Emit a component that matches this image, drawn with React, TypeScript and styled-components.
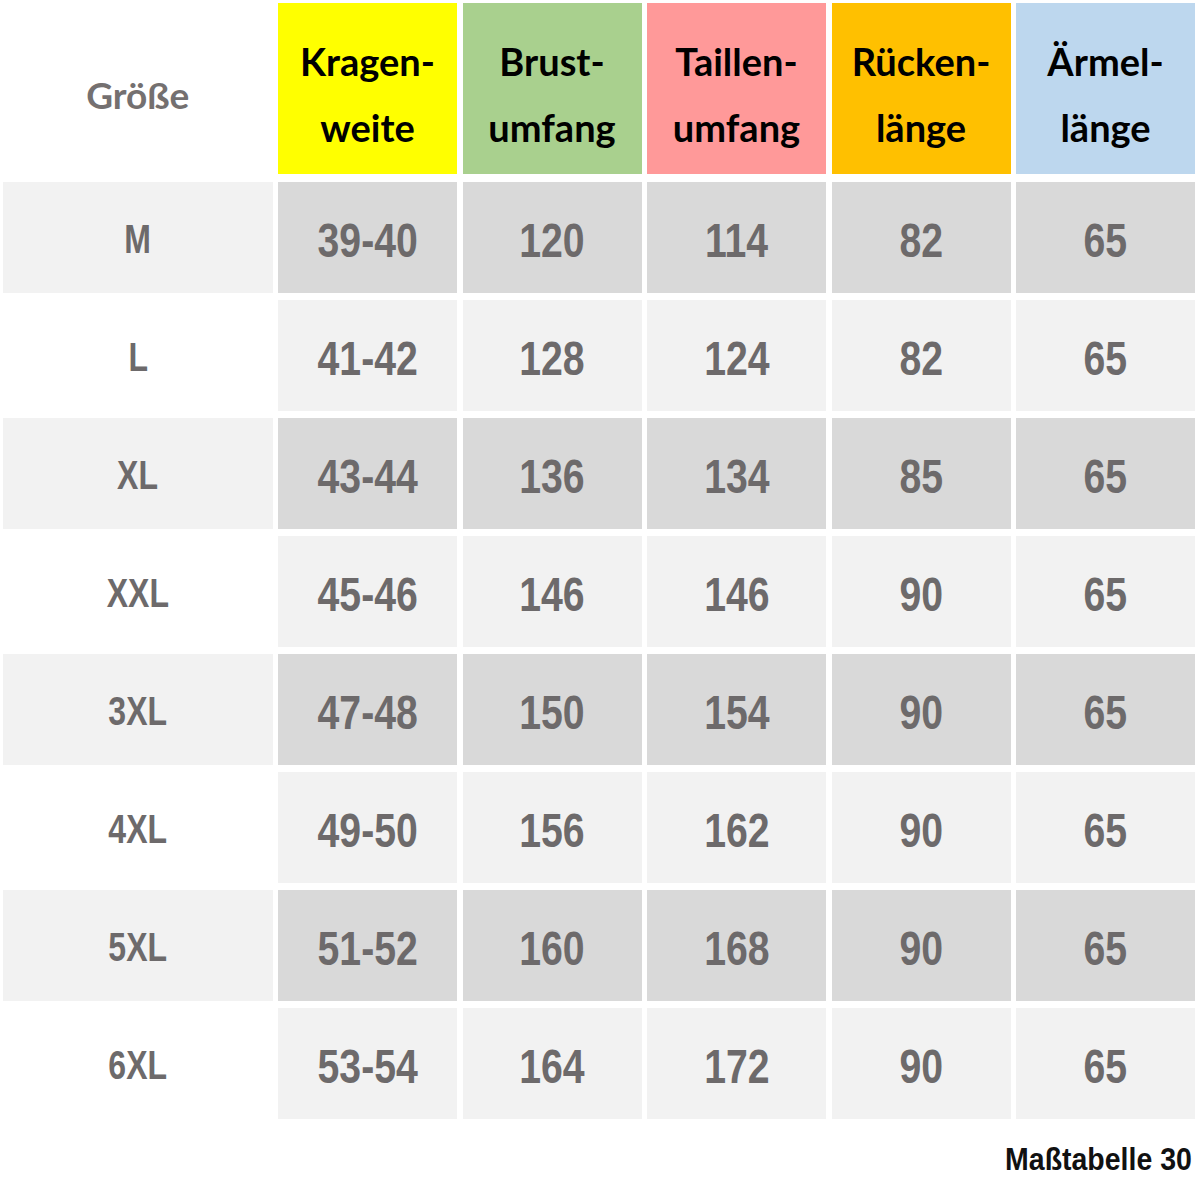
import React from "react";
import styled, { createGlobalStyle } from "styled-components";

const GlobalStyle = createGlobalStyle`
  html, body {
    margin: 0;
    padding: 0;
    background: #ffffff;
  }
`;

const Page = styled.div`
  width: 1200px;
  height: 1200px;
  padding: 3px 0 0 3px;
  box-sizing: border-box;
  display: flex;
  flex-direction: column;
`;

const Grid = styled.div`
  display: grid;
  grid-template-columns: 269.5px repeat(5, 179px);
  grid-template-rows: 172px repeat(8, 111px);
  column-gap: 5.5px;
  row-gap: 7px;
`;

const HeadCell = styled.div<{ $bg: string }>`
  background: ${(p) => p.$bg};
  display: flex;
  flex-direction: column;
  align-items: center;
  justify-content: center;
  padding-top: 10px;
  box-sizing: border-box;
  font-family: Lato, "Open Sans", sans-serif;
  font-weight: 700;
  font-size: 38px;
  line-height: 66px;
  color: #000000;
  text-align: center;
  margin-bottom: 1px;
`;

const SizeHead = styled(HeadCell)`
  color: #747070;
  font-size: 37px;
  padding-top: 12px;
`;

// the reference uses a narrow face, so a plain sans is squeezed
const Narrow = styled.span<{ $scale?: number }>`
  display: inline-block;
  transform: scaleX(${(p) => p.$scale ?? 0.8});
`;

const Cell = styled.div<{ $bg: string; $first?: boolean }>`
  background: ${(p) => p.$bg};
  display: flex;
  align-items: center;
  justify-content: center;
  font-family: "Liberation Sans", Arial, sans-serif;
  font-weight: 700;
  font-size: ${(p) => (p.$first ? "40px" : "49px")};
  color: #6d6a6b;
  padding-top: 4px;
  box-sizing: border-box;
`;

const Footer = styled.div`
  display: flex;
  justify-content: flex-end;
  padding: 22px 8px 0 0;
  font-family: "Liberation Sans", Arial, sans-serif;
  font-weight: 700;
  font-size: 32px;
  color: #111111;

  span {
    transform-origin: right center;
  }
`;

const headers = [
  { top: "Kragen-", bottom: "weite", bg: "#ffff00" },
  { top: "Brust-", bottom: "umfang", bg: "#a9d08e" },
  { top: "Taillen-", bottom: "umfang", bg: "#ff9999" },
  { top: "Rücken-", bottom: "länge", bg: "#ffc000" },
  { top: "Ärmel-", bottom: "länge", bg: "#bdd7ee" },
];

const rows = [
  ["M", "39-40", "120", "114", "82", "65"],
  ["L", "41-42", "128", "124", "82", "65"],
  ["XL", "43-44", "136", "134", "85", "65"],
  ["XXL", "45-46", "146", "146", "90", "65"],
  ["3XL", "47-48", "150", "154", "90", "65"],
  ["4XL", "49-50", "156", "162", "90", "65"],
  ["5XL", "51-52", "160", "168", "90", "65"],
  ["6XL", "53-54", "164", "172", "90", "65"],
];

export default function App() {
  return (
    <Page>
      <GlobalStyle />
      <Grid>
        <SizeHead $bg="#ffffff">Größe</SizeHead>
        {headers.map((h) => (
          <HeadCell key={h.top} $bg={h.bg}>
            <span>{h.top}</span>
            <span>{h.bottom}</span>
          </HeadCell>
        ))}
        {rows.map((row, i) => {
          const shaded = i % 2 === 0;
          return row.map((v, j) => (
            <Cell
              key={`${i}-${j}`}
              $first={j === 0}
              $bg={j === 0 ? (shaded ? "#f2f2f2" : "#ffffff") : shaded ? "#d9d9d9" : "#f2f2f2"}
            >
              <Narrow>{v}</Narrow>
            </Cell>
          ));
        })}
      </Grid>
      <Footer>
        <Narrow $scale={0.89}>Maßtabelle 30</Narrow>
      </Footer>
    </Page>
  );
}
